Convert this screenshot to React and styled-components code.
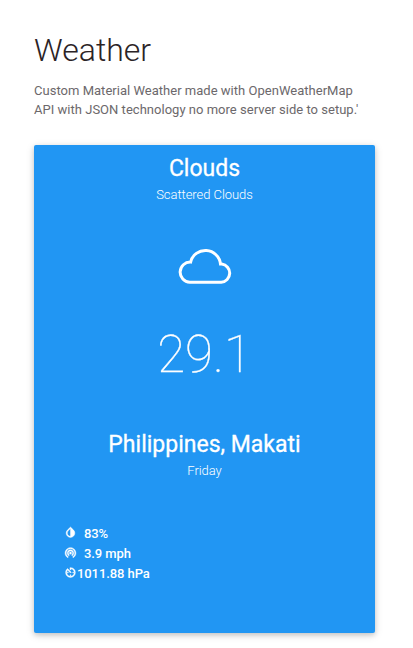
import React from "react";
import styled, { createGlobalStyle } from "styled-components";
import { MdInvertColors, MdWifiTethering, MdAvTimer } from "react-icons/md";

const GlobalStyle = createGlobalStyle`
  * { box-sizing: border-box; }
  body { margin: 0; background: #fff; font-family: Roboto, sans-serif; overflow: hidden; }
`;

const Page = styled.main`
  width: 413px;
  height: 648px;
  padding: 29px 38px 0 34px;
`;

const Title = styled.h1`
  margin: 0;
  font-size: 32px;
  line-height: 42px;
  font-weight: 300;
  color: #2b2326;
`;

const Intro = styled.p`
  margin: 10px 0 0;
  font-size: 13px;
  line-height: 19px;
  letter-spacing: 0.02px;
  font-weight: 400;
  color: #6c686b;
  white-space: nowrap;
`;

const Card = styled.section`
  display: flex;
  flex-direction: column;
  align-items: center;
  width: 341px;
  height: 488px;
  margin-top: 26px;
  padding-top: 8px;
  border-radius: 2px;
  background: #2196f3;
  color: #fff;
  box-shadow: 0 2px 5px rgba(0, 0, 0, 0.16), 0 2px 10px rgba(0, 0, 0, 0.12);
`;

const Heading = styled.h2`
  margin: 0;
  padding-top: 1px;
  font-size: 23px;
  line-height: 30px;
  font-weight: 400;
  -webkit-text-stroke: 0.3px #fff;
`;

const Caption = styled.div`
  font-size: 13px;
  line-height: 22px;
  font-weight: 300;
  letter-spacing: -0.05px;
`;

const Cloud = styled.svg`
  display: block;
  width: 54px;
  height: 37px;
  margin-top: 41px;
`;

const Temperature = styled.div`
  height: 60px;
  margin: 41px 0 44px;
  font-size: 51px;
  line-height: 60px;
  font-weight: 100;
  -webkit-text-stroke: 0.3px #fff;
`;

const Stats = styled.ul`
  align-self: stretch;
  margin: 41px 0 0;
  padding: 0 0 0 30px;
  list-style: none;
`;

const Stat = styled.li`
  display: flex;
  align-items: center;
  gap: ${(p) => p.$gap}px;
  height: 20px;
  font-size: 13px;
  font-weight: 500;
  letter-spacing: -0.08px;

  svg { width: 13px; height: 13px; margin-top: -1px; stroke-width: 0.8px; }
  svg path[fill="none"] { stroke: none; }
`;

const stats = [
  { icon: MdInvertColors, value: "83%", gap: 7 },
  { icon: MdWifiTethering, value: "3.9 mph", gap: 7 },
  { icon: MdAvTimer, value: "1011.88 hPa", gap: 0 },
];

export default function App() {
  return (
    <>
      <GlobalStyle />
      <Page>
        <Title>Weather</Title>
        <Intro>
          Custom Material Weather made with OpenWeatherMap
          <br />
          API with JSON technology no more server side to setup.'
        </Intro>
        <Card>
          <Heading>Clouds</Heading>
          <Caption>Scattered Clouds</Caption>
          <Cloud viewBox="0 0 54 37" fill="none" stroke="#fff" strokeWidth="3">
            <path d="M11.8 35.2H43.2A9.1 9.1 0 0 0 43.8 17.1H42.5A15.2 15.2 0 0 0 12.6 15.1A10.05 10.05 0 0 0 11.8 35.2Z" />
          </Cloud>
          <Temperature>29.1</Temperature>
          <Heading>Philippines, Makati</Heading>
          <Caption>Friday</Caption>
          <Stats>
            {stats.map(({ icon: Icon, value, gap }) => (
              <Stat key={value} $gap={gap}>
                <Icon />
                <span>{value}</span>
              </Stat>
            ))}
          </Stats>
        </Card>
      </Page>
    </>
  );
}
